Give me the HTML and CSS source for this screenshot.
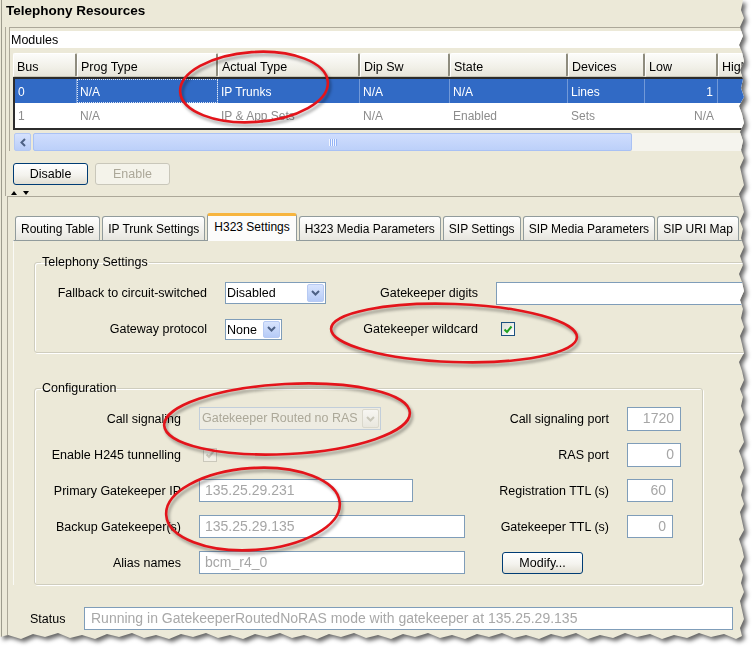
FILE: index.html
```html
<!DOCTYPE html>
<html>
<head>
<meta charset="utf-8">
<title>Telephony Resources</title>
<link rel="stylesheet" href="styles.css">
</head>
<body>
<div class="paper">
  <div class="sheet">
    <div class="frame">
      <h1 class="title">Telephony Resources</h1>
      <div class="upper">
        <div class="modbox">
          <div class="modules">Modules</div>
          <div class="table">
            <div class="thead">
              <div class="th c-bus">Bus</div>
              <div class="th c-prog">Prog Type</div>
              <div class="th c-act">Actual Type</div>
              <div class="th c-dip">Dip Sw</div>
              <div class="th c-state">State</div>
              <div class="th c-dev">Devices</div>
              <div class="th c-low">Low</div>
              <div class="th c-high">High</div>
            </div>
            <div class="tbody">
              <div class="tr sel">
                <div class="td c-bus">0</div>
                <div class="td c-prog focus">N/A</div>
                <div class="td c-act">IP Trunks</div>
                <div class="td c-dip">N/A</div>
                <div class="td c-state">N/A</div>
                <div class="td c-dev">Lines</div>
                <div class="td c-low num">1</div>
                <div class="td c-high num"></div>
              </div>
              <div class="tr">
                <div class="td c-bus">1</div>
                <div class="td c-prog">N/A</div>
                <div class="td c-act">IP &amp; App Sets</div>
                <div class="td c-dip">N/A</div>
                <div class="td c-state">Enabled</div>
                <div class="td c-dev">Sets</div>
                <div class="td c-low num">N/A</div>
                <div class="td c-high num"></div>
              </div>
            </div>
            <div class="hscroll">
              <div class="sb-btn">
                <svg width="8" height="9" viewBox="0 0 8 9"><path d="M6 1 L2.5 4.5 L6 8" fill="none" stroke="#4D6185" stroke-width="2"/></svg>
              </div>
              <div class="sb-thumb"><span class="grip"></span></div>
              <div class="sb-track"></div>
            </div>
          </div>
        </div>
        <div class="btnrow">
          <button class="btn">Disable</button>
          <button class="btn off">Enable</button>
        </div>
        <div class="splitter"><span class="arr up"></span><span class="arr down"></span></div>
      </div>

      <div class="lower">
        <div class="tabs">
          <div class="tab">Routing Table</div>
          <div class="tab">IP Trunk Settings</div>
          <div class="tab active">H323 Settings</div>
          <div class="tab">H323 Media Parameters</div>
          <div class="tab">SIP Settings</div>
          <div class="tab">SIP Media Parameters</div>
          <div class="tab">SIP URI Map</div>
        </div>
        <div class="tabpanel">
          <fieldset class="group tel">
            <legend>Telephony Settings</legend>
            <div class="tel-grid">
              <div class="lbl">Fallback to circuit-switched</div>
              <div class="combo w-fallback">
                <span class="val">Disabled</span>
                <span class="dd"><svg width="9" height="6" viewBox="0 0 9 6"><path d="M1 1 L4.5 4.5 L8 1" fill="none" stroke="#4D6185" stroke-width="2"/></svg></span>
              </div>
              <div class="lbl">Gatekeeper digits</div>
              <div class="field w-digits"></div>

              <div class="lbl">Gateway protocol</div>
              <div class="combo w-none">
                <span class="val">None</span>
                <span class="dd"><svg width="9" height="6" viewBox="0 0 9 6"><path d="M1 1 L4.5 4.5 L8 1" fill="none" stroke="#4D6185" stroke-width="2"/></svg></span>
              </div>
              <div class="lbl">Gatekeeper wildcard</div>
              <div class="cb cb-wild"><svg width="10" height="9" viewBox="0 0 10 9"><path d="M1.5 4.5 L4 7 L8.5 1.5" fill="none" stroke="#21A121" stroke-width="2"/></svg></div>
            </div>
          </fieldset>

          <fieldset class="group conf">
            <legend>Configuration</legend>
            <div class="conf-grid">
              <div class="lbl">Call signaling</div>
              <div class="combo dis w-call">
                <span class="val">Gatekeeper Routed no RAS</span>
                <span class="dd"><svg width="9" height="6" viewBox="0 0 9 6"><path d="M1 1 L4.5 4.5 L8 1" fill="none" stroke="#C9C7BA" stroke-width="2"/></svg></span>
              </div>
              <div class="lbl">Call signaling port</div>
              <div class="field num w-port">1720</div>

              <div class="lbl">Enable H245 tunnelling</div>
              <div class="cb dis cb-h245"><svg width="10" height="9" viewBox="0 0 10 9"><path d="M1.5 4.5 L4 7 L8.5 1.5" fill="none" stroke="#CAC8BB" stroke-width="2"/></svg></div>
              <div class="lbl">RAS port</div>
              <div class="field num w-port">0</div>

              <div class="lbl">Primary Gatekeeper IP</div>
              <div class="field w-ip">135.25.29.231</div>
              <div class="lbl">Registration TTL (s)</div>
              <div class="field num w-ttl">60</div>

              <div class="lbl">Backup Gatekeeper(s)</div>
              <div class="field w-long">135.25.29.135</div>
              <div class="lbl">Gatekeeper TTL (s)</div>
              <div class="field num w-ttl">0</div>

              <div class="lbl">Alias names</div>
              <div class="field w-long">bcm_r4_0</div>
              <button class="btn modify">Modify...</button>
            </div>
          </fieldset>
        </div>
        <div class="status">
          <div class="status-lbl">Status</div>
          <div class="field status-field">Running in GatekeeperRoutedNoRAS mode with gatekeeper at 135.25.29.135</div>
        </div>
      </div>
    </div>

    <svg class="marks" width="745" height="641" viewBox="0 0 745 641">
      <g fill="none" stroke="#E3141B" stroke-width="2.6">
        <ellipse cx="254" cy="87" rx="74" ry="35" transform="rotate(-4 254 87)"/>
        <ellipse cx="454" cy="333" rx="123" ry="29" transform="rotate(2 454 333)"/>
        <ellipse cx="287" cy="419" rx="123" ry="35" transform="rotate(-3 287 419)"/>
        <ellipse cx="253" cy="509" rx="87" ry="41" transform="rotate(-4 253 509)"/>
      </g>
    </svg>
  </div>
</div>
</body>
</html>
```

FILE: styles.css
```css
html, body {
  margin: 0;
  padding: 0;
  background: #ffffff;
}

body {
  font-family: "Liberation Sans", Arial, sans-serif;
  color: #000;
}

.paper {
  width: 756px;
  height: 649px;
  filter: drop-shadow(3px 3px 2px rgba(0, 0, 0, 0.6));
}

.sheet {
  position: relative;
  width: 745px;
  height: 641px;
  background: #ECE9D8;
  overflow: hidden;
  clip-path: polygon(0 0, 743px 0, 741px 10px, 744px 18px, 740px 27px, 743px 36px, 739px 45px, 742px 52px, 744px 61px, 740px 70px, 743px 79px, 741px 88px, 744px 97px, 739px 106px, 742px 114px, 744px 123px, 740px 132px, 743px 141px, 741px 150px, 744px 158px, 740px 167px, 742px 176px, 744px 185px, 739px 194px, 742px 203px, 744px 212px, 740px 221px, 743px 229px, 741px 238px, 744px 247px, 740px 256px, 743px 265px, 739px 274px, 742px 282px, 744px 291px, 740px 300px, 743px 309px, 741px 318px, 744px 327px, 740px 336px, 742px 344px, 744px 353px, 739px 362px, 742px 371px, 744px 380px, 740px 389px, 743px 397px, 741px 406px, 744px 415px, 740px 424px, 742px 433px, 744px 442px, 739px 451px, 742px 459px, 744px 468px, 740px 477px, 743px 486px, 741px 495px, 744px 504px, 740px 512px, 742px 521px, 744px 530px, 739px 539px, 742px 548px, 744px 557px, 740px 566px, 743px 575px, 741px 583px, 744px 592px, 740px 601px, 742px 610px, 744px 619px, 740px 628px, 742px 636px, 736px 639px, 724px 634px, 711px 637px, 699px 633px, 687px 638px, 674px 635px, 662px 639px, 650px 634px, 637px 637px, 625px 633px, 613px 638px, 600px 635px, 588px 639px, 576px 633px, 563px 637px, 551px 634px, 539px 639px, 526px 635px, 514px 638px, 502px 633px, 489px 637px, 477px 634px, 465px 639px, 452px 635px, 440px 638px, 428px 633px, 415px 637px, 403px 634px, 391px 639px, 378px 635px, 366px 638px, 354px 633px, 341px 637px, 329px 634px, 317px 639px, 304px 635px, 292px 638px, 280px 633px, 267px 637px, 255px 634px, 243px 639px, 230px 635px, 218px 638px, 206px 633px, 193px 637px, 181px 634px, 169px 639px, 156px 635px, 144px 638px, 132px 633px, 119px 637px, 107px 634px, 95px 639px, 82px 635px, 70px 638px, 58px 633px, 45px 637px, 33px 634px, 21px 639px, 8px 635px, 0 637px);
}

.frame {
  box-sizing: border-box;
  height: 100%;
  margin-left: 1px;
  border-left: 1px solid #9D9B8D;
  display: flex;
  flex-direction: column;
}

/* ---------- title ---------- */
.title {
  box-sizing: border-box;
  margin: 0;
  height: 27px;
  padding: 1px 0 0 4px;
  font-size: 13.5px;
  line-height: 20px;
  font-weight: bold;
  white-space: nowrap;
}

/* ---------- upper (modules) ---------- */
.upper {
  margin-left: 3px;
  border-left: 1px solid #ACA899;
}

.modbox {
  margin-left: 3px;
  border-top: 1px solid #ACA899;
  border-left: 1px solid #ACA899;
}

.modules {
  box-sizing: border-box;
  margin-top: 3px;
  height: 17px;
  padding: 2px 0 0 1px;
  background: #ffffff;
  font-size: 12.5px;
  line-height: 15px;
}

.table {
  margin: 5px 0 0 3px;
}

.thead {
  display: flex;
  height: 24px;
}

.th {
  flex: none;
  box-sizing: border-box;
  height: 24px;
  padding: 3px 0 0 3px;
  font-size: 12.5px;
  line-height: 20px;
  white-space: nowrap;
  overflow: hidden;
  background: linear-gradient(#FCFCFA, #F1F0E8 60%, #E7E5DA);
  border-top: 1px solid #ffffff;
  border-left: 1px solid #ffffff;
  border-bottom: 1px solid #C7C5B4;
  border-right: 2px solid #8E8C7E;
  border-radius: 2px;
}

.c-bus { width: 64px; }
.c-prog { width: 141px; }
.c-act { width: 142px; }
.c-dip { width: 90px; }
.c-state { width: 118px; }
.c-dev { width: 77px; }
.c-low { width: 73px; }
.c-high { width: 60px; }

.tbody {
  border: 2px solid #2C2C2C;
  border-right: none;
  background: #ffffff;
  padding-bottom: 1px;
}

.tbody .c-bus { width: 62px; }

.tr {
  display: flex;
  height: 24px;
}

.td {
  flex: none;
  box-sizing: border-box;
  height: 24px;
  padding: 2px 0 0 3px;
  font-size: 12px;
  line-height: 22px;
  color: #8C8C8C;
  white-space: nowrap;
  overflow: hidden;
}

.td.num {
  text-align: right;
  padding-right: 4px;
}

.tr.sel {
  background: #316AC5;
}

.tr.sel .td {
  color: #ffffff;
  border-right: 1px solid #7299D8;
}

.td.focus {
  outline: 1px dotted #DCE6F7;
  outline-offset: -1px;
}

.hscroll {
  display: flex;
  margin-top: 3px;
  height: 18px;
}

.sb-btn {
  flex: none;
  box-sizing: border-box;
  width: 17px;
  margin-left: 1px;
  border: 1px solid #B4C8F3;
  border-radius: 2px;
  background: linear-gradient(#D6E2FD, #B9CDF8);
  display: flex;
  align-items: center;
  justify-content: center;
}

.sb-thumb {
  flex: none;
  box-sizing: border-box;
  width: 599px;
  margin-left: 2px;
  border: 1px solid #A9C1F4;
  border-radius: 2px;
  background: linear-gradient(#CFDDFD, #BCD0F9);
  display: flex;
  align-items: center;
  justify-content: center;
}

.grip {
  width: 8px;
  height: 7px;
  background: repeating-linear-gradient(90deg, #F2F6FF 0 1px, #94B4F6 1px 2px);
}

.sb-track {
  flex: 1;
  background: #F5F4EE;
}

/* ---------- buttons ---------- */
.btnrow {
  display: flex;
  gap: 7px;
  margin: 12px 0 0 7px;
}

.btn {
  box-sizing: border-box;
  width: 75px;
  height: 22px;
  padding: 0;
  border: 1px solid #003C74;
  border-radius: 3px;
  background: linear-gradient(#FFFFFF, #F4F3EE 55%, #E2DFD3);
  font-family: "Liberation Sans", Arial, sans-serif;
  font-size: 12.5px;
  color: #000;
}

.btn.off {
  border-color: #C9C7BA;
  background: #F4F3EA;
  color: #ACA899;
}

.splitter {
  display: flex;
  align-items: flex-start;
  gap: 6px;
  height: 11px;
  box-sizing: border-box;
  padding: 6px 0 0 5px;
}

.arr {
  width: 0;
  height: 0;
  border-left: 3px solid transparent;
  border-right: 3px solid transparent;
}

.arr.up { border-bottom: 4px solid #000; }
.arr.down { border-top: 4px solid #000; }

/* ---------- lower panel ---------- */
.lower {
  flex: 1;
  margin-left: 5px;
  border-top: 1px solid #ACA899;
  border-left: 1px solid #ACA899;
}

.tabs {
  display: flex;
  align-items: flex-end;
  gap: 2px;
  height: 27px;
  margin: 16px 0 0 7px;
}

.tab {
  flex: none;
  box-sizing: border-box;
  height: 24px;
  padding: 2px 5px 0;
  border: 1px solid #919B9C;
  border-bottom: none;
  border-radius: 3px 3px 0 0;
  background: linear-gradient(#FFFFFF, #F4F3EF 50%, #E7E6DF);
  font-size: 12px;
  line-height: 21px;
  white-space: nowrap;
}

.tab.active {
  position: relative;
  z-index: 1;
  height: 28px;
  margin-bottom: -1px;
  padding: 0 6px;
  border-top: 3px solid #F7B53E;
  background: #FCFCFB;
  line-height: 22px;
}

.tabpanel {
  margin-left: 5px;
  border-top: 1px solid #919B9C;
  border-left: 1px solid #FAFAF6;
}

.group {
  box-sizing: border-box;
  min-width: 0;
  margin: 0 0 0 20px;
  padding: 0;
  border: 1px solid #CFCDBE;
  border-radius: 3px;
  box-shadow: inset 1px 1px 0 #FFFFFF, 1px 1px 0 #FFFFFF;
}

.group legend {
  margin-left: 6px;
  padding: 0 1px;
  font-size: 12.5px;
  line-height: 14px;
}

.tel {
  width: 740px;
  margin-top: 14px;
}

.conf {
  width: 669px;
  margin-top: 28px;
}

.tel-grid {
  display: grid;
  grid-template-columns: 172px 101px 134px 1fr;
  grid-auto-rows: 22px;
  column-gap: 18px;
  row-gap: 14px;
  align-items: center;
  padding: 13px 0 12px;
}

.conf-grid {
  display: grid;
  grid-template-columns: 146px 266px 126px 1fr;
  grid-auto-rows: 23px;
  column-gap: 18px;
  row-gap: 13px;
  align-items: center;
  padding: 12px 0 10px;
}

.lbl {
  text-align: right;
  font-size: 12.5px;
  white-space: nowrap;
}

/* ---------- controls ---------- */
.combo {
  box-sizing: border-box;
  display: flex;
  height: 22px;
  border: 1px solid #7F9DB9;
  background: #ffffff;
}

.combo .val {
  flex: 1;
  padding-left: 1px;
  font-size: 12.5px;
  line-height: 21px;
  white-space: nowrap;
  overflow: hidden;
}

.combo .dd {
  flex: none;
  box-sizing: border-box;
  width: 17px;
  margin: 1px;
  border: 1px solid #B7CAF3;
  border-radius: 2px;
  background: linear-gradient(#D8E4FD, #B6CBF7);
  display: flex;
  align-items: center;
  justify-content: center;
}

.combo.dis {
  height: 23px;
  border-color: #C2CEDA;
  background: #EEECE2;
}

.combo.dis .val {
  color: #ACA899;
  padding-left: 2px;
}

.combo.dis .dd {
  border-color: #DAD8CC;
  background: linear-gradient(#F7F6F2, #E9E7DE);
}

.w-fallback { width: 101px; }
.w-none { width: 57px; height: 21px; }
.w-call { width: 182px; }

.field {
  box-sizing: border-box;
  height: 23px;
  border: 1px solid #7F9DB9;
  background: #ffffff;
  padding: 0 5px;
  font-size: 14px;
  line-height: 21px;
  color: #A6A6A6;
  white-space: nowrap;
  overflow: hidden;
}

.field.num {
  text-align: right;
  padding-right: 6px;
}

.w-digits { width: 260px; }
.w-port { width: 54px; height: 24px; }
.w-ttl { width: 46px; }
.w-ip { width: 214px; }
.w-long { width: 266px; }

.cb {
  box-sizing: border-box;
  width: 14px;
  height: 14px;
  border: 1px solid #1C5180;
  background: linear-gradient(135deg, #DCDCD5, #FFFFFF);
  display: flex;
  align-items: center;
  justify-content: center;
}

.cb.dis {
  border-color: #CAC8BB;
  background: #F2F0E6;
}

.cb-wild { margin-left: 5px; }
.cb-h245 { margin-left: 4px; }

.btn.modify {
  width: 81px;
  margin-left: 19px;
  justify-self: start;
}

/* ---------- status ---------- */
.status {
  display: flex;
  align-items: center;
  margin: 22px 0 0 22px;
}

.status-lbl {
  width: 54px;
  flex: none;
  font-size: 12.5px;
}

.status-field {
  width: 649px;
  flex: none;
  padding-left: 6px;
  color: #A8A8A8;
}

/* ---------- annotation overlay ---------- */
.marks {
  position: absolute;
  left: 0;
  top: 0;
  pointer-events: none;
  filter: drop-shadow(2px 3px 1.5px rgba(0, 0, 0, 0.35));
}
```
